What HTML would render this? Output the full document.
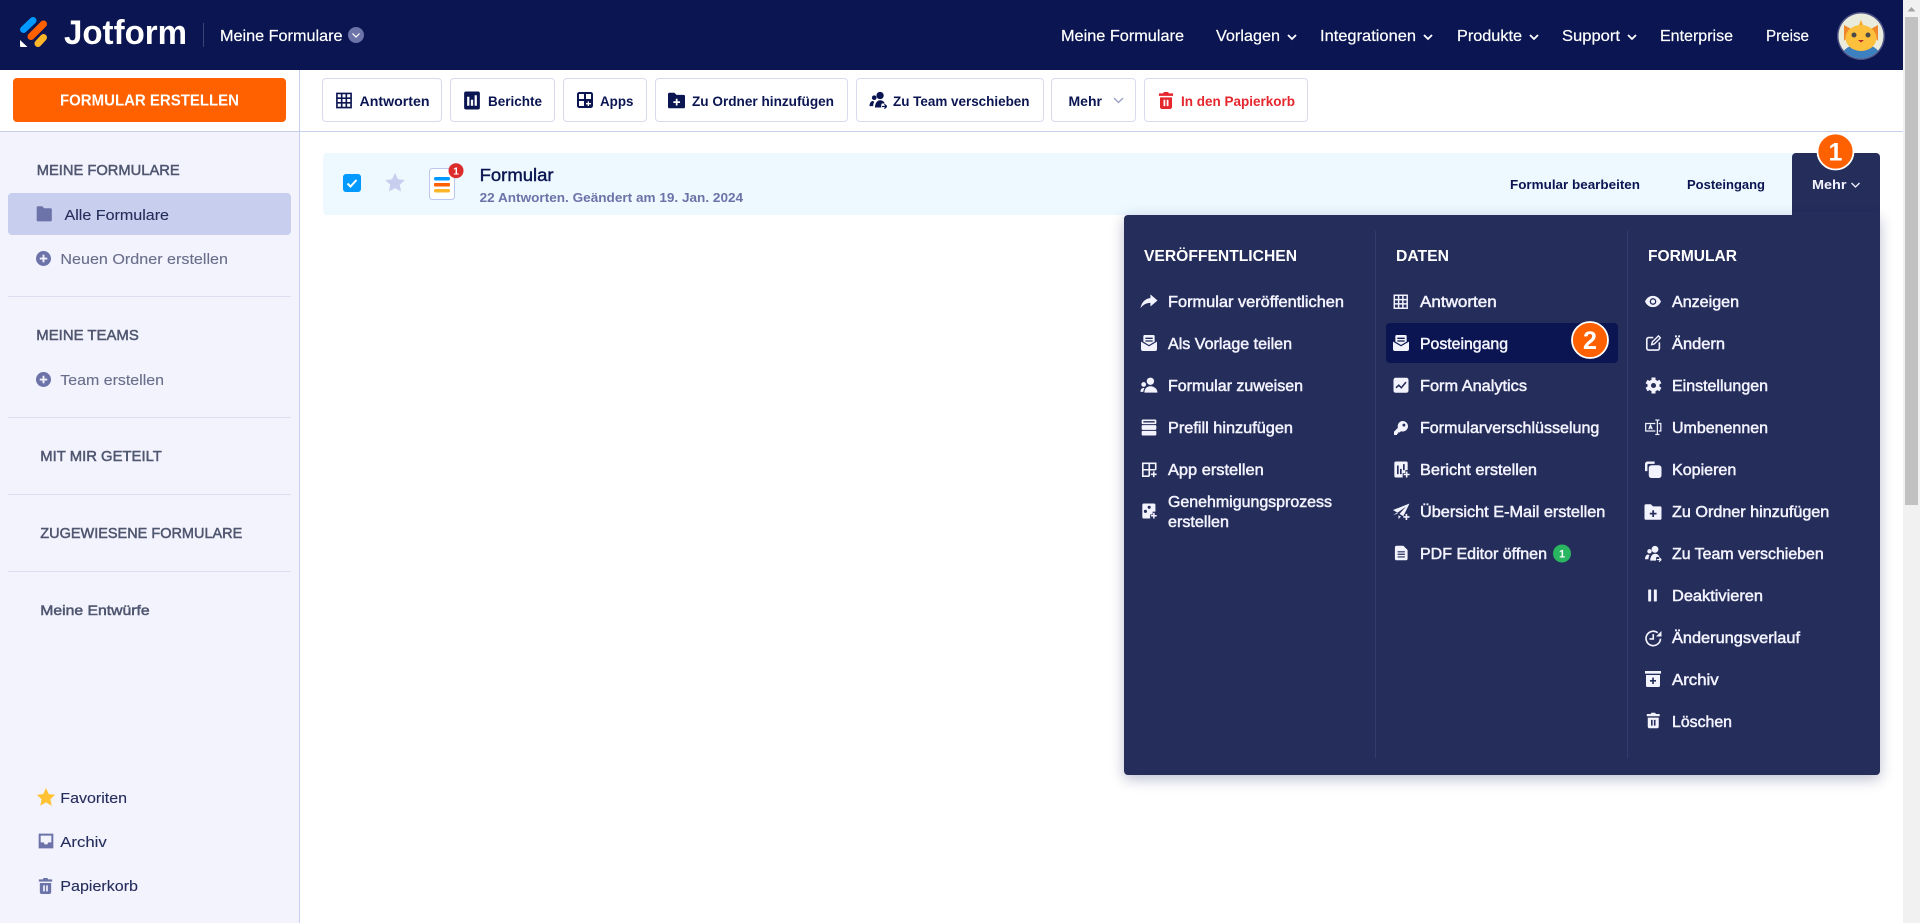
<!DOCTYPE html>
<html lang="de">
<head>
<meta charset="utf-8">
<title>Meine Formulare - Jotform</title>
<style>
html,body{margin:0;padding:0;width:1920px;height:923px;overflow:hidden;background:#fff;font-family:"Liberation Sans",sans-serif}
.b{position:absolute;box-sizing:border-box}
.btn{top:78px;height:44px;background:#fff;border:1px solid #d8dbee;border-radius:4px}
.div{left:8px;width:283px;height:1px;background:#dcdfef}
svg.layer{position:absolute;left:0;top:0;width:1920px;height:923px}
svg text{font-family:"Liberation Sans",sans-serif;white-space:pre}
.nav{font-size:16px;fill:#fff;stroke:#fff;stroke-width:.2}
.tb{font-size:14px;font-weight:700;fill:#0a1551}
.ra{font-size:13px;font-weight:700;fill:#0a1551}
.mi{font-size:16px;fill:#f3f3fe;stroke:#f3f3fe;stroke-width:.5}
.mh{font-size:16px;font-weight:700;fill:#fff}
.sh{font-size:15px;fill:#4f566f;stroke:#4f566f;stroke-width:.5}
.sl{font-size:15px;fill:#696e8a;stroke:#696e8a;stroke-width:.12}
.sb{font-size:15px;fill:#252d5b;stroke:#252d5b;stroke-width:.12}
</style>
</head>
<body>
<div class="b" style="left:0;top:0;width:1903px;height:70px;background:#0a1551"></div>
<div class="b" style="left:0;top:131px;width:300px;height:792px;background:#f3f3fe"></div>
<div class="b" style="left:299px;top:70px;width:1px;height:853px;background:#c8ceed"></div>
<div class="b" style="left:0;top:131px;width:1903px;height:1px;background:#c8ceed"></div>
<div class="b" style="left:13px;top:78px;width:273px;height:44px;background:#ff6100;border-radius:4px"></div>
<div class="b btn" style="left:322px;width:120px"></div>
<div class="b btn" style="left:450px;width:105px"></div>
<div class="b btn" style="left:563px;width:84px"></div>
<div class="b btn" style="left:655px;width:193px"></div>
<div class="b btn" style="left:856px;width:188px"></div>
<div class="b btn" style="left:1051px;width:85px"></div>
<div class="b btn" style="left:1144px;width:164px"></div>
<div class="b" style="left:8px;top:193px;width:283px;height:42px;background:#c8ceed;border-radius:4px"></div>
<div class="b div" style="top:296px"></div>
<div class="b div" style="top:417px"></div>
<div class="b div" style="top:494px"></div>
<div class="b div" style="top:571px"></div>
<div class="b" style="left:323px;top:153px;width:1480px;height:62px;background:#edf8ff;border-radius:4px 0 0 4px"></div>
<div class="b" style="left:1792px;top:153px;width:88px;height:70px;background:#252d5b;border-radius:4px 4px 0 0"></div>
<div class="b" style="left:1124px;top:215px;width:756px;height:560px;background:#252d5b;border-radius:4px 0 4px 4px;box-shadow:0 4px 14px rgba(10,21,81,.28)"></div>
<div class="b" style="left:1792px;top:212px;width:88px;height:8px;background:#252d5b"></div>
<div class="b" style="left:1375px;top:231px;width:1px;height:527px;background:#343c6c"></div>
<div class="b" style="left:1627px;top:231px;width:1px;height:527px;background:#343c6c"></div>
<div class="b" style="left:1386px;top:323px;width:232px;height:40px;background:#0a1551;border-radius:4px"></div>
<div class="b" style="left:1903px;top:0;width:17px;height:923px;background:#f1f1f1"></div>
<div class="b" style="left:1905px;top:17px;width:13px;height:488px;background:#c1c1c1"></div>

<svg class="layer" viewBox="0 0 1920 923" xmlns="http://www.w3.org/2000/svg">
<defs>
<symbol id="grid" viewBox="0 0 24 24"><path d="M2 2h20v20H2zM2 8.700h20M2 15.300h20M8.700 2v20M15.300 2v20" fill="none" stroke="currentColor" stroke-width="2.300"/></symbol>
<symbol id="report" viewBox="0 0 24 24"><path fill="currentColor" fill-rule="evenodd" d="M4 0h16a2.500 2.500 0 0 1 2.500 2.500v19A2.500 2.500 0 0 1 20 24H4a2.500 2.500 0 0 1-2.500-2.500v-19A2.500 2.500 0 0 1 4 0zM5.500 7v12h3V7zM10.500 11v8h3v-8zM15.500 5v14h3V5z"/></symbol>
<symbol id="apps" viewBox="0 0 24 24"><path fill="currentColor" fill-rule="evenodd" d="M3.500 0h17A3.500 3.500 0 0 1 24 3.500v17a3.500 3.500 0 0 1-3.500 3.500h-17A3.500 3.500 0 0 1 0 20.500v-17A3.500 3.500 0 0 1 3.500 0zM3 3v7.500h7.500V3zM13.500 3v7.500H21V3zM3 13.500V21h7.500v-7.500zM16 14v2.500h-2.500v2H16V21h2v-2.500h3v-2h-3V14z"/></symbol>
<symbol id="appplus" viewBox="0 0 24 24"><path fill="none" stroke="currentColor" stroke-width="2.500" d="M12 22H2V2h20v10M2 12h20M12 2v20"/><path stroke="currentColor" stroke-width="2.500" d="M19 14.500v9M14.500 19h9"/></symbol>
<symbol id="folder" viewBox="0 0 24 24"><path fill="currentColor" d="M1 3a2 2 0 0 1 2-2h6l3 3h9a2 2 0 0 1 2 2v15a2 2 0 0 1-2 2H3a2 2 0 0 1-2-2z"/></symbol>
<symbol id="folderplus" viewBox="0 0 24 24"><path fill="currentColor" fill-rule="evenodd" d="M0 3a2 2 0 0 1 2-2h7l3 3h10a2 2 0 0 1 2 2v15a2 2 0 0 1-2 2H2a2 2 0 0 1-2-2zM11 9.500v3.500H7.500v2.500H11V19h2.500v-3.500H17V13h-3.500V9.500z"/></symbol>
<symbol id="team" viewBox="0 0 24 24"><circle cx="14.500" cy="5.500" r="5" fill="currentColor"/><circle cx="6.500" cy="8.500" r="3.200" fill="currentColor"/><path fill="currentColor" d="M7.500 22c0-5 2.500-10 7-10 3 0 5.500 1.500 6.500 4.500h-4l-1 2V22zM0 20c0-4 2-7 4.500-7l2 1c-1 2-1.500 4-1.500 6z"/><path d="M17 20.500h6.500M20.500 17.500l3 3-3 3" fill="none" stroke="currentColor" stroke-width="1.700"/></symbol>
<symbol id="trash" viewBox="0 0 24 24"><path fill="currentColor" fill-rule="evenodd" d="M9 0h6l1 2h6v3.500H2V2h6zM3.500 7.500h17V21a3 3 0 0 1-3 3h-11a3 3 0 0 1-3-3zM8.500 11v9H11v-9zM13 11v9h2.500v-9z"/></symbol>
<symbol id="share" viewBox="0 0 24 24"><path fill="currentColor" d="M14 2l10 8.500L14 19v-5c-5 0-10 2-14 7.500 1-7.500 6-13.500 14-14.500z"/></symbol>
<symbol id="inbox" viewBox="0 0 24 24"><path fill="currentColor" fill-rule="evenodd" d="M5.500 0h13a2 2 0 0 1 2 2v8l-8.500 5-8.500-5V2a2 2 0 0 1 2-2zM6.500 4v2h11V4zM6.500 8v2h11V8zM0 10l12 7 12-7v11a3 3 0 0 1-3 3H3a3 3 0 0 1-3-3z"/></symbol>
<symbol id="assign" viewBox="0 0 24 24"><circle cx="14" cy="6" r="5.200" fill="currentColor"/><circle cx="4.500" cy="10.500" r="3.300" fill="currentColor"/><path fill="currentColor" d="M5.500 22c0-5 3-9 8.500-9s10 4 10 9zM0 21c0-3.500 1.500-5.500 4.500-5.500l1 .5C4.500 17.500 4 19.500 4 21z"/></symbol>
<symbol id="prefill" viewBox="0 0 24 24"><path fill="currentColor" fill-rule="evenodd" d="M2.500 0h19A1.500 1.500 0 0 1 23 1.500v4A1.500 1.500 0 0 1 21.500 7h-19A1.500 1.500 0 0 1 1 5.500v-4A1.500 1.500 0 0 1 2.500 0zM3.500 2.500v2h17v-2zM2.500 8.500h19a1.500 1.500 0 0 1 1.500 1.500v4a1.500 1.500 0 0 1-1.500 1.500h-19A1.500 1.500 0 0 1 1 14v-4a1.500 1.500 0 0 1 1.500-1.500zM2.500 17h19a1.500 1.500 0 0 1 1.500 1.500v4a1.500 1.500 0 0 1-1.500 1.500h-19A1.500 1.500 0 0 1 1 22.500v-4A1.500 1.500 0 0 1 2.500 17z"/></symbol>
<symbol id="approval" viewBox="0 0 24 24"><path fill="currentColor" fill-rule="evenodd" d="M3 0h16a2.500 2.500 0 0 1 2.500 2.500V13H17v4.500h-4V24H3a2.500 2.500 0 0 1-2.500-2.500v-19A2.500 2.500 0 0 1 3 0zM11.500 3.500a2.500 2.500 0 1 0 0 5 2.500 2.500 0 0 0 0-5zM5.500 10a2.500 2.500 0 1 0 0 5 2.500 2.500 0 0 0 0-5z"/><path stroke="currentColor" stroke-width="2.400" d="M19 15v9M14.500 19.500h9"/></symbol>
<symbol id="analytics" viewBox="0 0 24 24"><rect x="0" y="0" width="24" height="24" rx="3.500" fill="currentColor"/><path d="M4 16l4.500-4 4 4L20 7" fill="none" stroke="#252d5b" stroke-width="2.500"/></symbol>
<symbol id="key" viewBox="0 0 24 24"><path fill="currentColor" fill-rule="evenodd" d="M15 0a9 9 0 1 1-3 17.500L9.500 20v-.5H7V22H5v2H0v-5.500l6.700-7A9 9 0 0 1 15 0zM17 4.500a2.500 2.500 0 1 0 0 5 2.500 2.500 0 0 0 0-5z"/></symbol>
<symbol id="reportplus" viewBox="0 0 24 24"><path fill="currentColor" fill-rule="evenodd" d="M3 0h15a2.500 2.500 0 0 1 2.500 2.500V13H17v4.500h-4V24H3a2.500 2.500 0 0 1-2.500-2.500v-19A2.500 2.500 0 0 1 3 0zM4.500 6v13H7V6zM9 11v8h2.500v-8zM13.500 4v9H16V4z"/><path stroke="currentColor" stroke-width="2.400" d="M19 15v9M14.500 19.500h9"/></symbol>
<symbol id="plane" viewBox="0 0 24 24"><path fill="currentColor" d="M24 0L0 9.500l6.500 4L19 4.500 9.500 15l5.500 3.500zM0 17l5.500-3.500 1.500 1zM8 17v5.500l3.500-3.500z"/><path stroke="currentColor" stroke-width="2.400" d="M19.500 15v9M15 19.500h9"/></symbol>
<symbol id="doc" viewBox="0 0 24 24"><path fill="currentColor" fill-rule="evenodd" d="M4.500 0h11l7 7v14a3 3 0 0 1-3 3h-15a3 3 0 0 1-3-3V3a3 3 0 0 1 3-3zM6 9v2h12V9zM6 13v2h12v-2zM6 17.500v2h12v-2z"/></symbol>
<symbol id="eye" viewBox="0 0 24 24"><path fill="currentColor" fill-rule="evenodd" d="M12 3.500C6 3.500 2 7.500 0 12c2 4.500 6 8.500 12 8.500S22 16.500 24 12C22 7.500 18 3.500 12 3.500zM12 7a5 5 0 1 1 0 10 5 5 0 0 1 0-10z"/><circle cx="12" cy="12" r="3" fill="currentColor"/></symbol>
<symbol id="edit" viewBox="0 0 24 24"><path fill="none" stroke="currentColor" stroke-width="2.500" d="M12 3.500H5a3 3 0 0 0-3 3V20a3 3 0 0 0 3 3h13.500a3 3 0 0 0 3-3v-9"/><path fill="none" stroke="currentColor" stroke-width="2.200" d="M20 1l3 3-9.500 9.500-4 1 1-4z"/></symbol>
<symbol id="gear" viewBox="0 0 24 24"><g stroke="currentColor" stroke-width="6"><path d="M12 0v24M1.600 6l20.800 12M22.400 6L1.600 18"/></g><circle cx="12" cy="12" r="9" fill="currentColor"/><circle cx="12" cy="12" r="3.800" fill="#252d5b"/></symbol>
<symbol id="rename" viewBox="0 0 24 24"><path fill="none" stroke="currentColor" stroke-width="1.800" d="M15 6.500H1v11h14M20 6.500h3v11h-3M18 2v20M15 1.500h1.500A1.500 1.500 0 0 1 18 3a1.500 1.500 0 0 1 1.500-1.500H21M15 22.500h1.500A1.500 1.500 0 0 0 18 21a1.500 1.500 0 0 0 1.500 1.500H21M5.500 15l2.500-6 2.500 6M6.500 13h3"/></symbol>
<symbol id="copy" viewBox="0 0 24 24"><path fill="currentColor" d="M3.500 0H14v3.500H5A1.500 1.500 0 0 0 3.500 5v9H0V3.500A3.500 3.500 0 0 1 3.500 0z"/><rect x="5.500" y="5.500" width="18.500" height="18.500" rx="4" fill="currentColor"/></symbol>
<symbol id="pause" viewBox="0 0 24 24"><rect x="4" y="1" width="5.500" height="22" rx="1" fill="currentColor"/><rect x="14.500" y="1" width="5.500" height="22" rx="1" fill="currentColor"/></symbol>
<symbol id="history" viewBox="0 0 24 24"><path fill="none" stroke="currentColor" stroke-width="2.400" d="M22.500 12.500A10.500 10.500 0 1 1 18.500 4M12 6v7H6.500"/><path fill="currentColor" d="M24 1.500v8h-8z"/></symbol>
<symbol id="archive" viewBox="0 0 24 24"><rect x="0" y="0" width="24" height="4" fill="currentColor"/><path fill="currentColor" fill-rule="evenodd" d="M1.500 6h21v15.500a2.500 2.500 0 0 1-2.500 2.500H4a2.500 2.500 0 0 1-2.500-2.500zM10.800 10v3.500H7.500v2.500h3.300v3.500h2.500V16h3.200v-2.500h-3.200V10z"/></symbol>
<symbol id="tray" viewBox="0 0 24 24"><path fill="currentColor" fill-rule="evenodd" d="M1 1h22v22H1zM4 4v10h4.500l1.500 3h4l1.500-3H20V4z"/></symbol>
<symbol id="plusc" viewBox="0 0 24 24"><circle cx="12" cy="12" r="12" fill="currentColor"/><path stroke="#f3f3fe" stroke-width="3" d="M12 6v12M6 12h12"/></symbol>
</defs>

<!-- logo -->
<g stroke-linecap="round" stroke-width="7" fill="none">
<path d="M23.500 29.500L33 20.500" stroke="#0099ff"/>
<path d="M31 36.500L43.500 24" stroke="#ff6100"/>
<path d="M38 43.500L43.500 37.500" stroke="#ffb629"/>
</g>
<path d="M20 40l7.500 7H21a1 1 0 0 1-1-1z" fill="#fff"/>
<text x="64" y="44" font-size="34" font-weight="700" fill="#fff" textLength="123" lengthAdjust="spacingAndGlyphs">Jotform</text>
<rect x="203" y="23" width="1" height="24" fill="#3b4576"/>
<text class="nav" x="220" y="41" textLength="122.500" lengthAdjust="spacingAndGlyphs">Meine Formulare</text>
<circle cx="356" cy="35" r="8" fill="#6c73a8"/>
<path d="M352.500 33.500l3.500 3.500 3.500-3.500" fill="none" stroke="#fff" stroke-width="1.200"/>

<!-- nav -->
<text class="nav" x="1061" y="41" textLength="123" lengthAdjust="spacingAndGlyphs">Meine Formulare</text>
<text class="nav" x="1216" y="41" textLength="64" lengthAdjust="spacingAndGlyphs">Vorlagen</text>
<text class="nav" x="1320" y="41" textLength="96" lengthAdjust="spacingAndGlyphs">Integrationen</text>
<text class="nav" x="1457" y="41" textLength="65" lengthAdjust="spacingAndGlyphs">Produkte</text>
<text class="nav" x="1562" y="41" textLength="58" lengthAdjust="spacingAndGlyphs">Support</text>
<text class="nav" x="1660" y="41" textLength="73" lengthAdjust="spacingAndGlyphs">Enterprise</text>
<text class="nav" x="1766" y="41" textLength="43" lengthAdjust="spacingAndGlyphs">Preise</text>
<g fill="none" stroke="#fff" stroke-width="1.800">
<path d="M1288 35l4 4 4-4"/><path d="M1424 35l4 4 4-4"/><path d="M1530 35l4 4 4-4"/><path d="M1628 35l4 4 4-4"/>
</g>

<!-- avatar -->
<clipPath id="av"><circle cx="1861" cy="36" r="22.500"/></clipPath>
<circle cx="1861" cy="36" r="24" fill="#4c5285"/>
<g clip-path="url(#av)">
<rect x="1837" y="12" width="48" height="48" fill="#e9ebdd"/>
<ellipse cx="1861" cy="56" rx="19" ry="12" fill="#3d80c0"/>
<path d="M1844 25l9 5-9 11zM1878 25l-9 5 9 11z" fill="#f0872b"/>
<path d="M1861 20l2.500 6h-5z" fill="#f7a92d"/>
<ellipse cx="1861" cy="38" rx="15.500" ry="13" fill="#fcc03c"/>
<circle cx="1854" cy="35" r="2.500" fill="#4a4a4a"/>
<circle cx="1868" cy="35" r="2.500" fill="#4a4a4a"/>
<path d="M1858 40h6l-3 2.500z" fill="#b62a2a"/>
</g>

<!-- create button -->
<text x="60" y="105.500" font-size="16" font-weight="700" fill="#fff" textLength="179" lengthAdjust="spacingAndGlyphs">FORMULAR ERSTELLEN</text>

<!-- toolbar -->
<g color="#0a1551">
<use href="#grid" x="335.500" y="92" width="17" height="17"/>
<use href="#report" x="463" y="91.500" width="18" height="18"/>
<use href="#apps" x="577" y="92" width="16" height="16"/>
<use href="#folderplus" x="668" y="92" width="17" height="17"/>
<use href="#team" x="869.500" y="91.500" width="17.500" height="17.500"/>
</g>
<text class="tb" x="359.500" y="106" textLength="70" lengthAdjust="spacingAndGlyphs">Antworten</text>
<text class="tb" x="488" y="106" textLength="54" lengthAdjust="spacingAndGlyphs">Berichte</text>
<text class="tb" x="600" y="106" textLength="33.500" lengthAdjust="spacingAndGlyphs">Apps</text>
<text class="tb" x="692" y="106" textLength="142" lengthAdjust="spacingAndGlyphs">Zu Ordner hinzufügen</text>
<text class="tb" x="893" y="106" textLength="136.500" lengthAdjust="spacingAndGlyphs">Zu Team verschieben</text>
<text class="tb" x="1068.500" y="106" textLength="33.500" lengthAdjust="spacingAndGlyphs">Mehr</text>
<path d="M1114 98l4.500 4.500 4.500-4.500" fill="none" stroke="#979dc6" stroke-width="1.300"/>
<use href="#trash" x="1157.500" y="92" width="17" height="17" color="#e5262d"/>
<text class="tb" x="1181" y="106" textLength="114" lengthAdjust="spacingAndGlyphs" style="fill:#e5262d">In den Papierkorb</text>

<!-- sidebar -->
<text class="sh" x="36.700" y="175" textLength="143" lengthAdjust="spacingAndGlyphs">MEINE FORMULARE</text>
<use href="#folder" x="36" y="205.500" width="16.500" height="16.500" color="#6c73a8"/>
<text class="sb" x="64.500" y="220" textLength="104.500" lengthAdjust="spacingAndGlyphs">Alle Formulare</text>
<use href="#plusc" x="36" y="251" width="15" height="15" color="#6c73a8"/>
<text class="sl" x="60.400" y="264" textLength="167.600" lengthAdjust="spacingAndGlyphs">Neuen Ordner erstellen</text>
<text class="sh" x="36.300" y="340" textLength="102.500" lengthAdjust="spacingAndGlyphs">MEINE TEAMS</text>
<use href="#plusc" x="36" y="372" width="15" height="15" color="#6c73a8"/>
<text class="sl" x="60.300" y="385" textLength="103.700" lengthAdjust="spacingAndGlyphs">Team erstellen</text>
<text class="sh" x="40.300" y="461" textLength="121.500" lengthAdjust="spacingAndGlyphs">MIT MIR GETEILT</text>
<text class="sh" x="40.300" y="538" textLength="202" lengthAdjust="spacingAndGlyphs">ZUGEWIESENE FORMULARE</text>
<text class="sh" x="40.300" y="615" textLength="109.400" lengthAdjust="spacingAndGlyphs" style="font-size:14px">Meine Entwürfe</text>
<path d="M46 788l2.800 6.100 6.300.7-4.700 4.400 1.300 6.500L46 802.400l-5.700 3.300 1.300-6.500-4.700-4.400 6.300-.7z" fill="#ffc233"/>
<text class="sb" x="60.300" y="803" textLength="66.700" lengthAdjust="spacingAndGlyphs">Favoriten</text>
<use href="#tray" x="38" y="833" width="16" height="16" color="#6c73a8"/>
<text class="sb" x="60.300" y="847" textLength="46.400" lengthAdjust="spacingAndGlyphs">Archiv</text>
<use href="#trash" x="37.500" y="878" width="16" height="16" color="#6c73a8"/>
<text class="sb" x="60.300" y="891" textLength="77.700" lengthAdjust="spacingAndGlyphs">Papierkorb</text>

<!-- form row -->
<rect x="343" y="174" width="18" height="18" rx="3" fill="#0099ff"/>
<path d="M347.500 183.500l3 3 6-6.500" fill="none" stroke="#fff" stroke-width="2"/>
<path d="M395 173l2.900 6.300 6.900.8-5.100 4.700 1.400 6.700-6.100-3.400-6.100 3.400 1.400-6.700-5.100-4.700 6.900-.8z" fill="#c8ceed"/>
<rect x="429.500" y="168.500" width="25" height="31" rx="3" fill="#fff" stroke="#bcc6ee"/>
<rect x="434" y="177" width="16" height="3.500" rx="1.700" fill="#0099ff"/>
<rect x="434" y="183" width="16" height="3.500" rx="1" fill="#ff6100"/>
<rect x="434" y="189" width="16" height="3.500" rx="1.700" fill="#ffb629"/>
<circle cx="456" cy="170.700" r="7.500" fill="#dc2b2b"/>
<text x="456" y="174.500" font-size="10.500" font-weight="700" fill="#fff" text-anchor="middle">1</text>
<text x="479.600" y="181" font-size="17.500" fill="#0a1551" stroke="#0a1551" stroke-width=".4" textLength="74" lengthAdjust="spacingAndGlyphs">Formular</text>
<text x="479.600" y="202" font-size="13" font-weight="700" fill="#6c73a8" textLength="263.500" lengthAdjust="spacingAndGlyphs">22 Antworten. Geändert am 19. Jan. 2024</text>
<text class="ra" x="1510" y="189" textLength="130" lengthAdjust="spacingAndGlyphs">Formular bearbeiten</text>
<text class="ra" x="1687" y="189" textLength="78" lengthAdjust="spacingAndGlyphs">Posteingang</text>
<text class="ra" x="1812" y="189" textLength="34.500" lengthAdjust="spacingAndGlyphs" style="fill:#f3f3fe">Mehr</text>
<path d="M1851.500 183l4 4 4-4" fill="none" stroke="#f3f3fe" stroke-width="1.300"/>
<circle cx="1835.500" cy="151.500" r="18" fill="#ff6100" stroke="#fff" stroke-width="1.800"/>
<text x="1835.500" y="160.500" font-size="25" font-weight="700" fill="#fff" text-anchor="middle">1</text>

<!-- menu headers -->
<text class="mh" x="1144" y="261" textLength="153" lengthAdjust="spacingAndGlyphs">VERÖFFENTLICHEN</text>
<text class="mh" x="1396" y="261" textLength="53" lengthAdjust="spacingAndGlyphs">DATEN</text>
<text class="mh" x="1648" y="261" textLength="89" lengthAdjust="spacingAndGlyphs">FORMULAR</text>

<!-- menu icons -->
<g color="#f3f3fe">
<use href="#share" x="1140.500" y="293" width="17" height="17"/>
<use href="#inbox" x="1141" y="335" width="16" height="16"/>
<use href="#assign" x="1140.500" y="377" width="17" height="17"/>
<use href="#prefill" x="1141" y="419.500" width="16" height="16"/>
<use href="#appplus" x="1141.500" y="462" width="15.500" height="15.500"/>
<use href="#approval" x="1142" y="503" width="15" height="16"/>
<use href="#grid" x="1393" y="294" width="15.500" height="15.500"/>
<use href="#inbox" x="1393" y="335" width="16" height="16"/>
<use href="#analytics" x="1393.500" y="377.500" width="15" height="15.500"/>
<use href="#key" x="1394" y="421" width="14" height="14"/>
<use href="#reportplus" x="1394" y="461" width="16" height="17"/>
<use href="#plane" x="1393" y="503.500" width="16.500" height="16.500"/>
<use href="#doc" x="1394" y="545" width="14.500" height="16"/>
<use href="#eye" x="1645" y="293.500" width="16" height="16"/>
<use href="#edit" x="1645.500" y="335" width="15.500" height="16"/>
<use href="#gear" x="1645.500" y="377.500" width="16" height="16"/>
<use href="#rename" x="1645" y="419" width="16.500" height="16.500"/>
<use href="#copy" x="1645" y="461.500" width="16.500" height="16.500"/>
<use href="#folderplus" x="1644.500" y="503.500" width="17" height="17"/>
<use href="#team" x="1645" y="545.500" width="16.500" height="16.500"/>
<use href="#pause" x="1646" y="589" width="13" height="13"/>
<use href="#history" x="1645" y="630" width="16.500" height="16.500"/>
<use href="#archive" x="1645" y="671" width="16" height="16"/>
<use href="#trash" x="1645.500" y="712.500" width="15.500" height="16"/>
</g>

<!-- menu col 1 -->
<text class="mi" x="1168" y="307" textLength="176" lengthAdjust="spacingAndGlyphs">Formular veröffentlichen</text>
<text class="mi" x="1168" y="349" textLength="124" lengthAdjust="spacingAndGlyphs">Als Vorlage teilen</text>
<text class="mi" x="1168" y="391" textLength="135" lengthAdjust="spacingAndGlyphs">Formular zuweisen</text>
<text class="mi" x="1168" y="433" textLength="125" lengthAdjust="spacingAndGlyphs">Prefill hinzufügen</text>
<text class="mi" x="1168" y="475" textLength="95.700" lengthAdjust="spacingAndGlyphs">App erstellen</text>
<text class="mi" x="1168" y="507" textLength="164" lengthAdjust="spacingAndGlyphs">Genehmigungsprozess</text>
<text class="mi" x="1168" y="527" textLength="61" lengthAdjust="spacingAndGlyphs">erstellen</text>

<text class="mi" x="1420" y="307" textLength="76.700" lengthAdjust="spacingAndGlyphs">Antworten</text>
<text class="mi" x="1420" y="349" textLength="88" lengthAdjust="spacingAndGlyphs">Posteingang</text>
<text class="mi" x="1420" y="391" textLength="107" lengthAdjust="spacingAndGlyphs">Form Analytics</text>
<text class="mi" x="1420" y="433" textLength="179.300" lengthAdjust="spacingAndGlyphs">Formularverschlüsselung</text>
<text class="mi" x="1420" y="475" textLength="117" lengthAdjust="spacingAndGlyphs">Bericht erstellen</text>
<text class="mi" x="1420" y="517" textLength="185.300" lengthAdjust="spacingAndGlyphs">Übersicht E-Mail erstellen</text>
<text class="mi" x="1420" y="559" textLength="127" lengthAdjust="spacingAndGlyphs">PDF Editor öffnen</text>
<circle cx="1562" cy="553.500" r="9" fill="#2ab561"/>
<text x="1562" y="557.500" font-size="11" font-weight="700" fill="#fff" text-anchor="middle">1</text>
<circle cx="1590" cy="340" r="18" fill="#ff6100" stroke="#fff" stroke-width="1.800"/>
<text x="1590" y="349" font-size="25" font-weight="700" fill="#fff" text-anchor="middle">2</text>

<text class="mi" x="1672" y="307" textLength="67" lengthAdjust="spacingAndGlyphs">Anzeigen</text>
<text class="mi" x="1672" y="349" textLength="53" lengthAdjust="spacingAndGlyphs">Ändern</text>
<text class="mi" x="1672" y="391" textLength="96" lengthAdjust="spacingAndGlyphs">Einstellungen</text>
<text class="mi" x="1672" y="433" textLength="96" lengthAdjust="spacingAndGlyphs">Umbenennen</text>
<text class="mi" x="1672" y="475" textLength="64.300" lengthAdjust="spacingAndGlyphs">Kopieren</text>
<text class="mi" x="1672" y="517" textLength="157.300" lengthAdjust="spacingAndGlyphs">Zu Ordner hinzufügen</text>
<text class="mi" x="1672" y="559" textLength="151.700" lengthAdjust="spacingAndGlyphs">Zu Team verschieben</text>
<text class="mi" x="1672" y="601" textLength="91" lengthAdjust="spacingAndGlyphs">Deaktivieren</text>
<text class="mi" x="1672" y="643" textLength="128" lengthAdjust="spacingAndGlyphs">Änderungsverlauf</text>
<text class="mi" x="1672" y="685" textLength="46.700" lengthAdjust="spacingAndGlyphs">Archiv</text>
<text class="mi" x="1672" y="727" textLength="60" lengthAdjust="spacingAndGlyphs">Löschen</text>

<!-- scrollbar arrow -->
<path d="M1907.500 11.500l4-4.500 4 4.500z" fill="#a3a3a3"/>
</svg>
</body>
</html>
